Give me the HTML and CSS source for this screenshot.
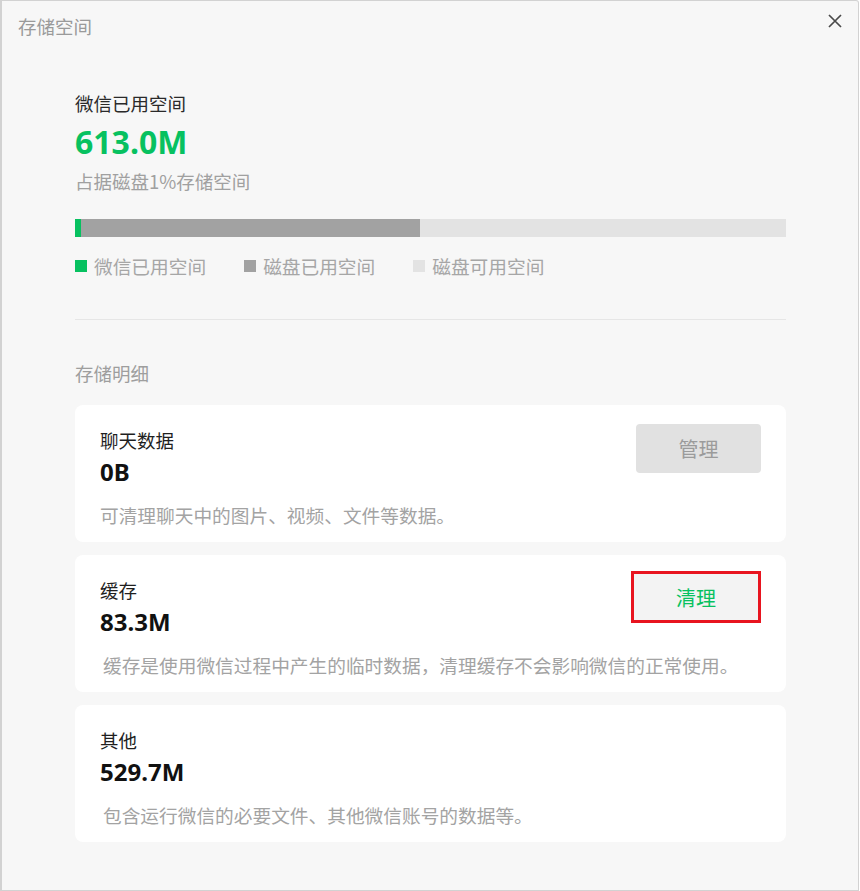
FILE: index.html
```html
<!DOCTYPE html>
<html lang="zh-CN">
<head>
<meta charset="utf-8">
<title>存储空间</title>
<link rel="stylesheet" href="styles.css">
</head>
<body>
<div class="window">
  <div class="header">
    <div class="win-title">存储空间</div>
    <button class="close" aria-label="关闭">
      <svg width="16" height="16" viewBox="0 0 16 16"><path d="M2 2L14 14M14 2L2 14" stroke="#4a4a4a" stroke-width="1.7" fill="none"/></svg>
    </button>
  </div>
  <div class="content">
    <div class="used-label">微信已用空间</div>
    <div class="used-value">613.0M</div>
    <div class="used-sub">占据磁盘1%存储空间</div>
    <div class="bar">
      <div class="seg seg-wx" style="width:6px"></div>
      <div class="seg seg-disk" style="width:339px"></div>
      <div class="seg seg-free"></div>
    </div>
    <div class="legend">
      <div class="legend-item"><span class="sw sw-wx"></span>微信已用空间</div>
      <div class="legend-item"><span class="sw sw-disk"></span>磁盘已用空间</div>
      <div class="legend-item"><span class="sw sw-free"></span>磁盘可用空间</div>
    </div>
    <div class="divider"></div>
    <div class="section-title">存储明细</div>
    <div class="cards">
      <div class="card">
        <div class="card-head">
          <div class="info">
            <div class="card-title">聊天数据</div>
            <div class="card-value">0B</div>
          </div>
          <button class="btn btn-manage">管理</button>
        </div>
        <div class="card-desc">可清理聊天中的图片、视频、文件等数据。</div>
      </div>
      <div class="card">
        <div class="card-head">
          <div class="info">
            <div class="card-title">缓存</div>
            <div class="card-value">83.3M</div>
          </div>
          <button class="btn btn-clean">清理</button>
        </div>
        <div class="card-desc indent">缓存是使用微信过程中产生的临时数据，清理缓存不会影响微信的正常使用。</div>
      </div>
      <div class="card">
        <div class="card-head">
          <div class="info">
            <div class="card-title">其他</div>
            <div class="card-value">529.7M</div>
          </div>
        </div>
        <div class="card-desc indent">包含运行微信的必要文件、其他微信账号的数据等。</div>
      </div>
    </div>
  </div>
</div>
</body>
</html>
```
FILE: styles.css
```css
html, body {
  margin: 0;
  padding: 0;
  background: #ffffff;
}
body {
  font-family: "Noto Sans CJK SC", "Microsoft YaHei", "Noto Sans", sans-serif;
}
.window {
  box-sizing: border-box;
  width: 859px;
  height: 891px;
  background: #f7f7f7;
  border: 1px solid #d2d2d2;
  border-left-width: 2px;
  border-top-right-radius: 3px;
}
.header {
  display: flex;
  justify-content: space-between;
  align-items: flex-start;
  padding: 13px 15px 0 16px;
}
.win-title {
  font-size: 18.5px;
  line-height: 24px;
  color: #9a9a9a;
}
.close {
  border: 0;
  background: transparent;
  padding: 0;
  margin-top: -1px;
  width: 16px;
  height: 16px;
  display: flex;
}
.content {
  padding: 0 72px 0 73px;
  display: flex;
  flex-direction: column;
}
.used-label {
  margin-top: 53px;
  font-size: 18.5px;
  line-height: 24px;
  color: #2a2a2a;
}
.used-value {
  margin-top: 7px;
  font-family: "Noto Sans", "Noto Sans CJK SC", sans-serif;
  font-size: 32px;
  line-height: 40px;
  font-weight: 700;
  color: #07c160;
}
.used-sub {
  margin-top: 7px;
  font-size: 18.5px;
  line-height: 24px;
  color: #a0a0a0;
}
.bar {
  margin-top: 26px;
  height: 18px;
  display: flex;
  background: #e3e3e3;
}
.seg { height: 100%; }
.seg-wx { background: #07c160; }
.seg-disk { background: #a2a2a2; }
.seg-free { flex: 1; background: #e3e3e3; }
.legend {
  margin-top: 17px;
  display: flex;
  gap: 38px;
}
.legend-item {
  display: flex;
  align-items: center;
  gap: 7px;
  font-size: 18.7px;
  line-height: 24px;
  color: #a6a6a6;
}
.sw {
  width: 12px;
  height: 12px;
  display: inline-block;
}
.sw-wx { background: #07c160; }
.sw-disk { background: #a2a2a2; }
.sw-free { background: #e3e3e3; }
.divider {
  margin-top: 41px;
  height: 1px;
  background: #e6e6e6;
}
.section-title {
  margin-top: 41px;
  font-size: 18.5px;
  line-height: 24px;
  color: #9e9e9e;
}
.cards {
  margin-top: 20px;
  display: flex;
  flex-direction: column;
  gap: 13px;
}
.card {
  box-sizing: border-box;
  height: 137px;
  background: #ffffff;
  border-radius: 8px;
  padding: 19px 25px 0 25px;
  display: flex;
  flex-direction: column;
}
.card-head {
  display: flex;
  justify-content: space-between;
  align-items: flex-start;
}
.info {
  padding-top: 4px;
  display: flex;
  flex-direction: column;
}
.card-title {
  font-size: 18.5px;
  line-height: 24px;
  color: #1f1f1f;
}
.card-value {
  margin-top: 5px;
  font-family: "Noto Sans", "Noto Sans CJK SC", sans-serif;
  font-size: 24px;
  line-height: 30px;
  font-weight: 700;
  color: #111111;
}
.card-desc {
  margin-top: 16px;
  font-size: 18.7px;
  line-height: 24px;
  color: #a3a3a3;
  white-space: nowrap;
}
.card-desc.indent {
  padding-left: 3px;
}
.btn {
  font-family: inherit;
  font-size: 20px;
  box-sizing: border-box;
  display: flex;
  align-items: center;
  justify-content: center;
  padding: 0;
  cursor: pointer;
}
.btn-manage {
  width: 125px;
  height: 49px;
  border: 0;
  border-radius: 4px;
  background: #e1e1e1;
  color: #9b9b9b;
}
.btn-clean {
  width: 130px;
  height: 52px;
  margin-top: -3px;
  border: 3px solid #e8141f;
  border-radius: 0;
  background: #f3f3f3;
  color: #07c160;
}
```
